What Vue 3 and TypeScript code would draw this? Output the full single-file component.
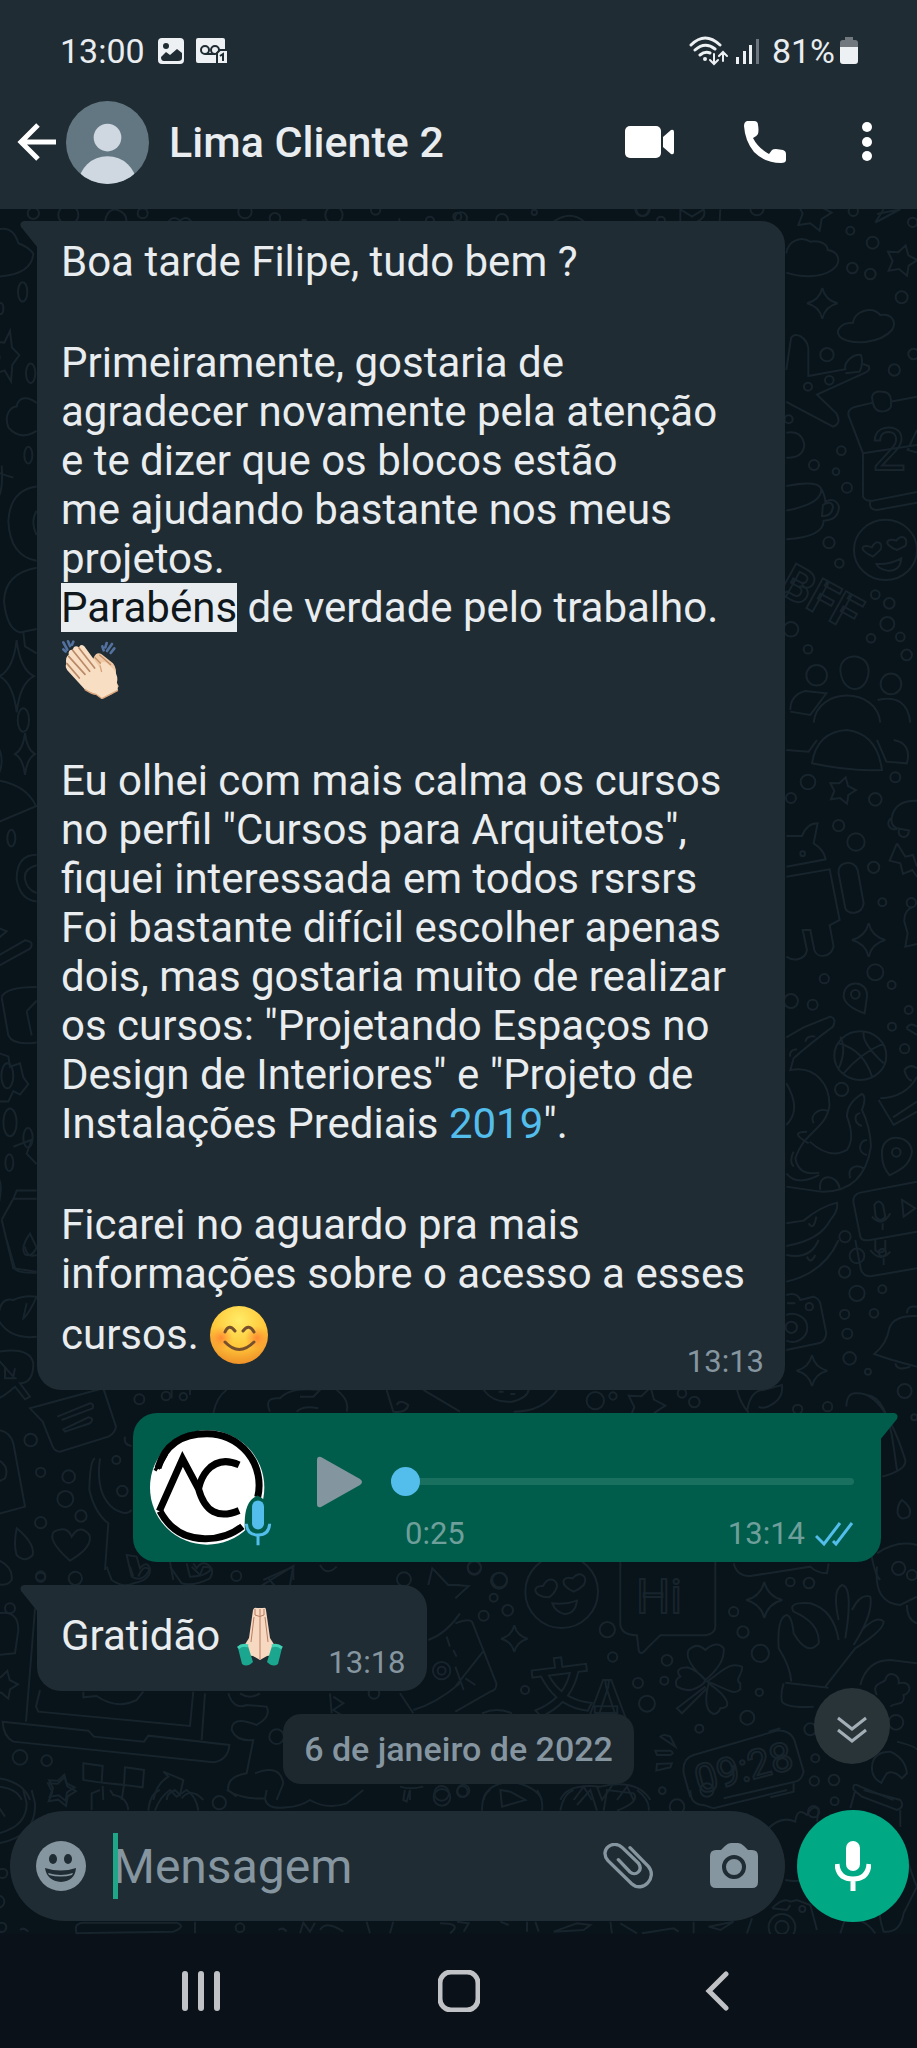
<script setup lang="ts">
import { ref } from 'vue'

type Dot = [x: number, y: number, r: number]
interface Sketch {
  place: string
  dots: Dot[]
  stars?: Dot[]
  sparkles?: Dot[]
  lines: string
}

const draft = ref('')
const progress = ref(0)

const opening = 'Boa tarde Filipe, tudo bem ?'
const thanksLines = `Primeiramente, gostaria de
agradecer novamente pela atenção
e te dizer que os blocos estão
me ajudando bastante nos meus
projetos.`
const courseLines = `Eu olhei com mais calma os cursos
no perfil "Cursos para Arquitetos",
fiquei interessada em todos rsrsrs
Foi bastante difícil escolher apenas
dois, mas gostaria muito de realizar
os cursos: "Projetando Espaços no
Design de Interiores" e "Projeto de`
const closingLines = `Ficarei no aguardo pra mais
informações sobre o acesso a esses`

function star([cx, cy, r]: Dot): string {
  const points: string[] = []
  for (let i = 0; i < 10; i++) {
    const reach = i % 2 ? r * 0.55 : r
    const angle = (i * Math.PI) / 5 - 1.3
    points.push(`${Math.round(cx + reach * Math.cos(angle))} ${Math.round(cy + reach * Math.sin(angle))}`)
  }
  return `M${points.join('L')}Z`
}

function sparkle([x, y, r]: Dot): string {
  const k = Math.round(r / 5)
  return `M${x} ${y - r}Q${x + k} ${y - k} ${x + r} ${y}Q${x + k} ${y + k} ${x} ${y + r}Q${x - k} ${y + k} ${x - r} ${y}Q${x - k} ${y - k} ${x} ${y - r}Z`
}

/* Wallpaper drawings, grouped by the part of the canvas that they cover. */
const sketches: Sketch[] = [
  {
    place: 'translate(617 200) scale(.3333)',
    dots: [[75, 28, 20], [420, 26, 20], [700, 92, 12], [767, 128, 18], [706, 204, 16], [760, 222, 16], [854, 292, 18], [630, 464, 20], [832, 510, 17], [890, 462, 16], [573, 560, 12], [637, 541, 13], [673, 752, 13], [591, 795, 15], [657, 815, 10], [690, 863, 15], [636, 1028, 17], [667, 1090, 13], [775, 1184, 13], [817, 1210, 16], [811, 1272, 21], [762, 1315, 13], [850, 1311, 13], [869, 1365, 16], [573, 1348, 13], [522, 1288, 22], [515, 658, 12], [709, 34, 14], [887, 67, 14], [599, 1426, 31], [822, 1452, 31]],
    stars: [[588, 40, 56], [853, 182, 48]],
    sparkles: [[616, 310, 46]],
    lines: 'M508 160C512 125 550 105 580 125C615 120 632 135 632 150C668 155 675 190 645 210C610 235 550 232 508 218 M708 368C710 335 765 315 790 345C825 340 840 365 825 390C790 430 710 435 675 415C650 400 665 368 708 368Z M508 510L522 415C535 390 570 415 574 445V528L685 508C680 485 710 460 732 465Q740 490 728 515L685 520 M738 492L755 498Q762 510 745 518L600 584L658 640Q675 670 648 680L508 606 M768 608L710 622Q690 630 695 648L738 760V890Q745 905 768 902L900 876 M738 760L900 735 M900 690L872 750L900 758 M765 590Q770 572 795 575Q820 575 822 600V620Q815 636 790 634Q768 632 765 590 M820 605L900 590 M760 905Q755 930 780 930L900 908 M508 698Q555 690 562 735Q558 775 508 773 M508 858Q600 840 612 865Q620 910 508 932 M614 868Q625 890 625 905Q655 890 666 920Q665 960 620 962Q620 1010 508 1018 M618 915Q645 900 648 920Q645 950 615 948Z M780 42L850 28 M780 65L840 32 M711 1050A94 90 0 1 1 900 1050A94 90 0 1 1 711 1050 M768 1070C715 1045 740 1030 765 1042C780 1015 800 1030 790 1050Z M840 1050C790 1030 815 1012 838 1022C855 1000 875 1015 865 1038Z M778 1092Q815 1095 853 1075Q850 1115 812 1112Q785 1108 778 1092Z M670 1410C670 1355 755 1355 755 1415C750 1485 675 1485 670 1410Z M520 1530Q520 1485 565 1473L628 1480L580 1545L520 1535 M590 1568C600 1460 780 1460 790 1568 M782 1500Q870 1480 880 1568',
  },
  {
    place: 'translate(617 740) scale(.3333)',
    dots: [[573, 126, 22], [522, 174, 15], [775, 178, 19], [835, 112, 15], [665, 257, 17], [717, 306, 26], [770, 382, 17], [796, 487, 12], [557, 341, 7], [622, 716, 14], [775, 697, 24], [824, 735, 12], [587, 794, 15], [522, 783, 21], [715, 763, 13], [825, 860, 12], [863, 926, 14], [875, 810, 12], [674, 1048, 20], [838, 1237, 13], [684, 1490, 17], [720, 1548, 22], [796, 1538, 11], [883, 488, 14]],
    stars: [[675, 152, 42]],
    sparkles: [[755, 600, 50]],
    lines: 'M585 70Q600 -25 690 -30Q780 -20 795 90Q700 95 585 70Z M508 30L575 35L600 0 M780 0L808 65L870 70Q885 10 830 0 M508 288H555Q570 250 602 250L590 310Q622 330 626 358L508 380 M508 410L638 388L668 540L638 556L650 620C640 655 600 655 592 630L580 570H557L570 630C565 660 530 665 508 650 M665 400C660 360 715 360 722 390L740 490C735 525 692 525 685 505Z M840 310L865 350L888 345L900 380 M840 310L818 362L850 370L858 402L886 390L900 410 M900 182Q835 180 825 230Q818 255 840 265L880 272 M822 235A15 15 0 1 0 842 265 M850 265A15 15 0 1 0 875 275 M890 500Q860 510 862 545L872 580L865 620L900 612 M680 770C680 715 755 720 750 770L743 820Q685 800 680 770Z M508 892L560 862Q590 850 640 830Q660 835 648 860Q580 910 530 955L520 990C600 975 640 1040 637 1100C625 1170 560 1175 535 1255Q545 1310 607 1298 M565 905Q570 885 595 890 M520 950Q515 930 540 928 M590 1150C575 1120 615 1100 636 1115 M508 1030Q555 1110 508 1155 M578 1205Q640 1260 690 1230Q715 1195 690 1130Q690 1090 735 1062Q750 1070 735 1110Q760 1160 762 1220Q740 1360 610 1355L508 1340 M575 1210C530 1185 535 1175 570 1175 M530 1235Q515 1265 530 1280 M610 1350C600 1300 660 1300 668 1345 M700 1315C690 1285 715 1270 740 1285 M750 1200C725 1200 720 1240 750 1245 M730 1120C710 1120 710 1150 735 1158 M508 1300Q540 1340 607 1305 M652 947A78 73 0 1 1 808 947A78 73 0 1 1 652 947 M665 910Q740 930 765 1010 M680 1000Q730 940 800 910 M670 890Q690 930 665 985 M740 878Q735 910 800 970 M785 1080L830 1155L900 1115 M790 1075Q870 1070 900 1010 M828 1132L900 1085 M862 990Q880 970 900 985 M862 990Q870 1020 885 1022 M795 1245C790 1175 880 1180 885 1235C880 1275 850 1290 818 1306Q795 1280 795 1245Z M900 1325L730 1358Q705 1365 710 1390L730 1490Q735 1505 760 1500L900 1475 M772 1395Q785 1375 798 1395L805 1430Q790 1450 776 1430Z M765 1430Q795 1465 820 1420 M797 1450V1470 M855 1380L895 1405L860 1430Z M508 1450L560 1442Q610 1400 660 1388Q665 1410 640 1440Q610 1500 508 1518 M575 1450Q590 1475 598 1430 M868 865Q880 845 900 860 M868 865L900 885',
  },
  {
    place: 'translate(457 1240) scale(.3333)',
    dots: [[1163, 96, 17], [1200, 160, 23], [1276, 148, 12], [1163, 223, 14], [1251, 220, 13], [1171, 281, 15], [1178, 355, 19], [1233, 395, 9], [1343, 453, 21], [1372, 532, 9], [1003, 262, 17], [1057, 200, 11], [415, 482, 26], [468, 468, 11], [675, 460, 13], [712, 486, 16], [1112, 500, 14], [1022, 508, 14], [52, 984, 20], [128, 1020, 22]],
    stars: [[565, 500, 60]],
    sparkles: [[1065, 392, 46]],
    lines: 'M988 45Q1060 60 1085 0 M988 125Q1100 100 1145 0 M1050 50Q1060 75 1075 45 M1195 0L1212 90Q1222 112 1245 108L1380 85 M1240 30Q1270 70 1300 35 M1280 55V75 M1255 0V30Q1268 45 1285 30V0 M988 165Q1020 155 1030 180L1070 170Q1085 175 1090 190L1108 280Q1105 305 1085 310L988 330 M988 225A45 42 0 1 1 988 302 M990 190H1015 M1380 228Q1310 225 1297 265Q1290 310 1252 342Q1300 360 1380 380 M1350 220Q1350 195 1380 200 M1315 370Q1320 395 1360 380 M80 450Q110 490 165 485Q210 475 215 450 M170 515Q260 515 300 450 M125 455H140 M160 462H175 M840 450Q850 490 875 518 M870 515Q880 450 920 450L975 435Q980 470 950 490Q920 510 905 500 M1168 500Q1170 455 1200 460Q1280 455 1345 660Q1350 690 1275 710 M1230 465Q1290 470 1310 620L1320 690 M1335 780Q1370 805 1355 830Q1330 845 1322 820Q1320 795 1335 780Z M1240 920Q1250 1000 1270 1020 M1260 940Q1320 900 1380 915',
  },
  {
    place: 'translate(0 1240) scale(.3333)',
    dots: [[418, 478, 15], [92, 600, 19], [122, 697, 14], [206, 710, 19], [196, 777, 24], [122, 848, 17], [243, 828, 17], [349, 660, 12], [367, 753, 16], [498, 468, 13], [550, 470, 11], [122, 1008, 14]],
    stars: [],
    lines: 'M20 0L45 85Q50 100 110 98 M75 20Q80 55 110 45 M-5 230Q0 170 40 180Q70 165 110 170Q85 225 70 235L80 190 M-5 240Q30 300 110 290 M-5 335Q90 320 100 370Q100 430 60 430L90 470L75 478L45 440Q10 470 -5 475 M-5 360L40 410L45 385 M15 380V415H50 M90 505L310 445L348 560Q345 580 325 590L180 635Q165 635 158 620L128 545Z M172 530L270 490Q282 490 278 505L185 540 M190 568L265 532Q285 535 270 550L195 575Z M515 475V440L570 430V465 M-5 570Q30 575 40 610L75 800L-5 822 M-5 660Q30 680 15 715L-5 725 M285 655Q270 660 268 750Q285 820 325 850L315 990 M300 655Q285 760 340 805Q380 830 395 810 M375 590Q370 615 395 618 M50 865Q105 910 98 945Q75 970 50 945Q40 915 50 865Z M210 962Q140 900 162 875Q200 855 215 890Q240 850 268 885Q280 920 210 962Z M380 945L395 1010Q430 1030 450 985Q440 960 420 985L410 950Z M510 965L520 1020 M560 970L570 1010Q620 1010 635 985Q610 955 590 985L580 970 M640 520Q650 470 680 450 M810 515Q790 470 840 475Q870 440 960 450L940 470H900 M1010 450Q1050 480 1040 515 M890 515Q910 495 955 505 M1160 450L1180 515Q1220 520 1225 495Q1200 475 1190 495 M1270 450L1380 515 M790 1020L880 980V1020',
  },
  {
    place: 'translate(0 1560) scale(.3333)',
    dots: [[60, 592, 22], [140, 602, 16], [122, 52, 14], [226, 55, 20], [709, 48, 15], [1212, 58, 21], [30, 145, 15], [1122, 400, 16], [1325, 332, 12], [1325, 332, 26], [830, 530, 22], [1325, 700, 22]],
    stars: [[10, 375, 44], [182, 684, 42]],
    lines: 'M-5 0Q40 20 35 60Q20 80 -5 72 M320 20L335 60Q370 85 400 70Q450 60 450 30Q430 10 415 50 M390 20L400 50 M510 20L545 70Q580 80 630 55Q650 20 610 20L600 45L575 20 M780 80L880 18L870 75 M805 55L825 78 M960 15Q980 50 1010 20 M1285 75L1297 25L1345 75H1380 M-5 160Q55 150 55 210L45 280L-5 285 M105 145L78 485 M120 390L108 440L115 455L570 498L580 395 M615 400L605 540 M250 395V412L290 408Q350 450 410 420L430 395 M8 485L265 512L282 530L432 545L445 527L688 555Q685 600 640 607L40 545Q10 530 8 485Z M250 610L308 618L305 668L250 660Z M375 622L432 630L428 682L372 675Z M308 668L372 675L365 720 M308 678L310 720 M460 720Q470 670 505 650L490 635L550 660L540 705L525 690Q500 700 500 720 M545 715Q575 680 610 720 M685 400Q700 450 740 435L800 440Q815 470 770 495Q695 465 695 510Q710 545 760 540L740 640Q680 650 685 690L710 710 M765 640Q840 610 850 670L830 720 M720 400Q750 420 780 400 M1285 240Q1340 220 1380 160 M1340 230L1350 260 M1360 270L1370 290 M1200 400L1240 460 M1240 450Q1310 430 1380 370 M1000 410L1030 430L1000 450L1025 465 M990 400L995 460 M-5 655Q70 665 90 720 M-5 680Q50 685 65 720 M1200 680Q1230 690 1270 680 M1230 690V720',
  },
  {
    place: 'translate(457 1560) scale(.3333)',
    dots: [[52, 22, 20], [126, 62, 24], [110, 113, 12], [152, 151, 16], [80, 167, 15], [451, 209, 23], [467, 291, 14], [204, 390, 12], [543, 369, 15], [622, 362, 12], [630, 301, 16], [570, 431, 24], [830, 155, 14], [858, 216, 17], [910, 280, 26], [907, 397, 11], [871, 473, 21], [727, 506, 12], [616, 692, 10], [1000, 66, 13], [1056, 69, 16], [1075, 595, 12], [1072, 663, 14], [1131, 660, 16], [1060, 508, 18], [1317, 487, 22], [1325, 25, 20], [19, 692, 18], [1365, 45, 15]],
    sparkles: [[172, 236, 40], [922, 120, 54]],
    lines: 'M205 95A109 109 0 1 1 423 95A109 109 0 1 1 205 95 M275 112C225 110 225 75 258 78C275 45 305 60 299 83Q290 105 275 112Z M350 95C305 75 315 45 347 55C370 30 395 50 380 75Q365 90 350 95Z M286 130Q325 135 360 122Q355 162 322 162Q295 155 286 130Z M490 5V195Q495 225 540 226L545 270Q550 290 570 265L610 226H745Q775 220 775 200V5 M-5 75L35 78L-5 115 M-5 190Q35 175 45 185L118 370Q120 390 100 395L-5 455 M-5 380L78 275 M25 355L55 375 M-5 320L20 390 M850 370C830 360 860 340 855 320C820 305 800 330 750 365C800 380 830 410 850 388Z M745 360Q680 300 695 270Q720 245 745 270Q780 240 800 265Q805 310 745 360Z M740 370Q700 405 660 380Q650 360 670 350Q650 325 690 322Q720 330 745 360Z M755 370Q735 450 770 462Q785 460 790 445Q815 445 810 425Q800 400 755 370Z M745 380L660 445L675 460L750 385 M1003 365Q1000 320 965 265Q960 170 990 165Q1005 170 1010 220Q1050 290 1085 250Q1090 190 1010 155Q990 125 1060 130Q1130 150 1145 240 M1145 180Q1125 90 1155 75Q1190 80 1165 235 M1185 150Q1210 100 1240 110Q1250 160 1190 255 M1215 210Q1260 165 1280 185Q1280 210 1195 265L1105 380 M980 370Q970 400 975 425Q990 445 1070 440 M985 368L1115 383 M1210 375Q1230 300 1300 300L1380 310 M1260 405C1240 370 1280 370 1285 360C1290 330 1330 340 1325 370C1365 360 1365 400 1340 405C1345 440 1315 425 1300 440 M1260 20Q1250 130 1330 135L1380 110 M1350 135Q1350 180 1380 190 M830 10Q840 50 880 48L1060 20Q1080 40 1110 40L1115 10 M75 460Q120 440 165 460 M610 530L655 560L640 530Q620 520 610 530Z M595 572H640Q655 580 640 585H600Z M598 632L640 622L645 610L600 612Z M700 712L680 640Q675 595 710 585L960 512Q1005 510 1015 550L1040 635Q1035 660 1015 665L800 715 M1010 670V695L940 712 M935 515L970 505 M1320 545Q1380 560 1380 570 M1245 625Q1245 575 1300 575Q1345 595 1350 640L1335 655Q1310 630 1290 640Q1270 670 1275 670Q1245 655 1245 625Z M1190 690Q1185 665 1210 680L1310 720 M80 720Q90 670 165 665Q240 680 255 720 M310 720Q330 670 430 680Q540 655 580 720 M350 720L380 680L405 720 M420 680L435 720L470 670 M480 720L510 680L530 720',
  },
  {
    place: 'translate(0 1790) scale(.3333)',
    dots: [[658, 38, 20], [1326, 22, 25], [8, 250, 14], [-5, 335, 18], [720, 413, 13], [5, 412, 14]],
    stars: [[182, 5, 46]],
    lines: 'M-5 160Q110 140 105 40L95 0 M-5 130Q80 110 80 40L70 0 M-5 50L15 80 M275 60V10L300 0 M330 0L340 15Q380 20 385 60 M445 62Q450 10 480 0 M465 62Q480 20 510 0L530 20L560 0Q590 20 595 62 M680 0Q730 30 795 25Q800 60 860 52Q900 50 930 30Q980 60 1040 40L1090 0 M795 25L800 0 M1215 0L1210 30L1220 35L1230 0 M230 430Q220 400 250 398H530Q560 410 520 425L310 428Z M585 395V430 M60 420Q70 410 85 425 M835 420Q850 410 860 425 M900 430L910 398L930 425L945 398 M960 420Q980 390 1030 425 M1100 395L1110 430 M1170 430L1180 395 M1320 400Q1390 400 1350 430',
  },
  {
    place: 'translate(457 1790) scale(.3333)',
    dots: [[16, 5, 16], [1133, 34, 12], [1070, 65, 17], [1036, 357, 9], [975, 412, 40], [975, 412, 20], [750, 0, 20], [660, 50, 22]],
    lines: 'M75 62Q75 10 100 0 M240 0Q260 30 255 62 M130 0L135 50L205 30L160 5Z M310 62Q320 10 350 0 M360 45L400 0L420 62 M440 62L450 0L530 10Q550 35 480 62 M540 0Q580 30 575 62 M700 0Q700 45 740 45L770 55L990 0 M1190 0L1215 20L1320 60Q1345 50 1330 30L1220 0 M1195 0L1180 55 M930 120Q970 75 1015 95Q1020 50 1050 75Q1070 40 1085 60L1080 95 M1330 60V110 M1350 205Q1370 270 1380 290L1340 370Q1330 430 1280 425Q1265 380 1270 360 M985 270Q1030 280 1050 260 M945 355Q980 320 1000 335L1020 330L1060 345L1080 420 M945 355L990 360L1000 345 M870 430L885 385 M1150 430L1165 385Q1220 380 1255 430 M0 395L35 400L20 425 M130 395L155 405 M210 395V425 M235 395L245 425 M290 425L360 400L400 405L380 420Z M460 395L465 430 M490 400L540 430 M555 430L650 415L665 425 M710 430V395 M755 410L830 395L790 420Z',
  },
  {
    place: 'translate(0 205) scale(.3333 .695)',
    dots: [[68, 125, 14], [2, 149, 8], [85, 360, 12], [92, 242, 14], [70, 741, 17], [34, 911, 12], [30, 1320, 20], [84, 1342, 14], [28, 1378, 12], [22, 1253, 18]],
    stars: [[20, 218, 38]],
    sparkles: [[50, 678, 52], [75, 790, 30]],
    lines: 'M-5 35Q40 30 55 55Q85 60 100 70Q95 100 -5 103 M25 320C10 300 35 290 50 290C55 275 85 275 110 285 M25 320Q60 340 110 325 M-5 385Q20 390 40 392 M-5 420Q10 410 5 375 M110 405Q30 410 25 455Q30 505 110 512 M110 440Q90 455 110 475 M110 522Q15 530 12 570Q20 610 60 615L110 610 M70 615L75 635L110 645 M-5 780Q15 800 -5 820 M-5 828Q80 835 108 865L-5 888 M110 935Q50 935 50 970Q60 1000 110 1002 M110 950Q70 955 75 970Q80 985 110 990 M-5 1040L20 1045L-5 1055 M-5 1080L75 1058Q105 1060 90 1070L-5 1095 M5 1140L25 1195Q40 1210 110 1205 M5 1140Q15 1125 110 1125 M80 1160L110 1145 M80 1160L95 1195 M-5 1220L25 1225L30 1240L60 1235L70 1255L85 1265L60 1280L40 1275L25 1290H-5 M40 1355L95 1345L80 1365L110 1380 M-5 1400Q10 1410 -5 1440 M5 1460L40 1530L110 1535 M5 1460L40 1430H110 M40 1430L50 1418H110 M90 1480Q60 1500 75 1510Q95 1515 110 1500Z',
  },
  {
    place: 'translate(0 0) scale(.3333)',
    dots: [[100, 640, 17], [205, 645, 30], [428, 640, 15], [735, 635, 20], [825, 655, 16], [1002, 645, 26], [1127, 630, 14], [1290, 662, 12], [1372, 650, 12]],
    lines: 'M315 665Q320 630 345 628 M345 628Q380 635 380 665 M505 665Q520 645 540 662Q560 645 575 665 M905 660H920 M1198 655V665',
  },
  {
    place: 'translate(457 0) scale(.3333)',
    dots: [[12, 655, 18], [135, 660, 18], [232, 637, 8], [558, 628, 20], [612, 662, 12]],
    lines: 'M290 665Q340 630 382 665 M670 665V628L705 650L740 628Q750 650 720 665 M790 628L788 665 M1255 668L1280 628 M1255 668L1330 628',
  },
]
</script>

<template>
  <div class="phone">
    <header class="top">
      <div class="status">
        <div class="status-side">
          <time>13:00</time>
          <svg class="status-photo" width="26" height="26" viewBox="0 0 26 26" aria-hidden="true">
            <rect width="26" height="26" rx="4" fill="#edf1f4" />
            <circle cx="8" cy="8" r="3" fill="#202c33" />
            <path d="M3 19L8 14L12 17L19 11L24 15V20Q24 23 20 23H6Q3 23 3 19Z" fill="#202c33" />
          </svg>
          <svg width="32" height="26" viewBox="0 0 32 26" aria-hidden="true">
            <rect width="29" height="25" rx="2" fill="#edf1f4" />
            <g fill="none" stroke="#202c33" stroke-width="2">
              <circle cx="9" cy="12" r="4" />
              <circle cx="19" cy="12" r="4" />
              <path d="M9 16H19" />
            </g>
            <path d="M21 26V15L24 12H32V26Z" fill="#edf1f4" stroke="#202c33" stroke-width="2" />
            <path d="M24 18L27 16V23" fill="none" stroke="#202c33" stroke-width="2" />
          </svg>
        </div>
        <div class="status-side">
          <svg width="39" height="30" viewBox="0 0 39 30" fill="none" stroke="#edf1f4" stroke-width="3" stroke-linecap="round" aria-hidden="true">
            <path d="M2 9Q16 -5 31 9M6 14Q16 5 26 13M11 19Q16 15 21 17" />
            <circle cx="16" cy="23" r="1" stroke-width="2" />
            <path d="M25 18V27M21 24L25 28L29 24M34 25V17M30 20L34 16L38 20" stroke-width="2" />
          </svg>
          <svg class="signal" width="25" height="26" viewBox="0 0 25 26" aria-hidden="true">
            <path d="M1 19h3v7H1zM8 13h3v13H8zM14 7h3v19h-3z" fill="#edf1f4" />
            <path d="M21 1h3v25h-3z" fill="#6b757b" />
          </svg>
          <span>81%</span>
          <svg class="battery" width="18" height="28" viewBox="0 0 18 28" aria-hidden="true">
            <path d="M5 0H13V3H15Q18 3 18 6V10H0V6Q0 3 3 3H5Z" fill="#71797e" />
            <path d="M0 10H18V24Q18 27 15 27H3Q0 27 0 24Z" fill="#edf1f4" />
          </svg>
        </div>
      </div>

      <div class="appbar">
        <button class="icon" type="button" aria-label="Voltar">
          <svg width="39" height="38" viewBox="0 0 39 38" fill="none" stroke="#fff" stroke-width="5" aria-hidden="true">
            <path d="M39 19H4M21 2L4 19L21 36" />
          </svg>
        </button>
        <svg class="contact" width="83" height="83" viewBox="0 0 84 84" aria-hidden="true">
          <defs><clipPath id="face"><circle cx="42" cy="42" r="42" /></clipPath></defs>
          <g clip-path="url(#face)">
            <rect width="84" height="84" fill="#637783" />
            <circle cx="42" cy="37" r="14" fill="#cfd8e0" />
            <ellipse cx="42" cy="83" rx="29" ry="27" fill="#cfd8e0" />
          </g>
        </svg>
        <h1>Lima Cliente 2</h1>
        <div class="actions">
          <button class="icon" type="button" aria-label="Chamada de vídeo">
            <svg width="50" height="32" viewBox="0 0 50 32" fill="#fff" aria-hidden="true">
              <rect width="36" height="32" rx="5" />
              <path d="M38 11L46 4Q49 3 49 6V26Q49 29 46 28L38 21Z" />
            </svg>
          </button>
          <button class="icon" type="button" aria-label="Chamada de voz">
            <svg width="42" height="42" viewBox="0 0 42 42" fill="#fff" aria-hidden="true">
              <path d="M3 0H10Q14 0 14 4Q15 9 14 13Q13 15 9 17Q14 27 25 33L28 29Q29 28 32 28L39 29Q42 30 42 33V39Q42 42 37 42Q21 42 10 31Q1 20 0 5Q0 1 3 0Z" />
            </svg>
          </button>
          <button class="icon menu" type="button" aria-label="Mais opções">
            <svg width="12" height="40" viewBox="0 0 12 40" fill="#fff" aria-hidden="true">
              <circle cx="6" cy="5" r="5" /><circle cx="6" cy="20" r="5" /><circle cx="6" cy="34" r="5" />
            </svg>
          </button>
        </div>
      </div>
    </header>

    <div class="chat">
      <svg class="wallpaper" viewBox="0 209 917 1725" preserveAspectRatio="xMidYMin slice" aria-hidden="true">
        <g v-for="sketch in sketches" :key="sketch.place" :transform="sketch.place">
          <circle v-for="(dot, i) in sketch.dots" :key="i" :cx="dot[0]" :cy="dot[1]" :r="dot[2]" />
          <path v-for="(dot, i) in sketch.stars" :key="'star' + i" :d="star(dot)" />
          <path v-for="(dot, i) in sketch.sparkles" :key="'sparkle' + i" :d="sparkle(dot)" />
          <path :d="sketch.lines" />
        </g>
        <text x="636" y="1613" class="doodle-hi">Hi</text>
        <text x="872" y="470" class="doodle-date">2</text>
        <text class="doodle-bff" transform="translate(777 592) rotate(29)">BFF</text>
        <text class="doodle-clock" transform="translate(699 1794) rotate(-15)">09:28</text>
        <text class="doodle-lang" transform="translate(534 1712) rotate(-7)">文</text>
        <text class="doodle-letter" x="587" y="1722">A</text>
      </svg>

      <main class="messages">
        <article class="bubble received long">
          <p>{{ opening }}</p>
          <p class="spaced">{{ thanksLines }}<br><mark>Parabéns</mark> de verdade pelo trabalho.</p>
          <svg class="clap" width="60" height="60" viewBox="188 236 180 180" role="img" aria-label="Aplausos">
            <g stroke-width="8" stroke-linecap="round" stroke="#52719f">
              <path d="M195 246L207 268M209 243L215 257M195 267L202 274M225 244L221 253M341 251L326 272M325 248L321 261M312 258L316 270M348 264L337 278" />
            </g>
            <path d="M286 292Q295 273 310 282L344 309Q359 327 350 356L361 378Q350 404 310 413L291 401L249 371Z" fill="#efc9a5" />
            <path d="M289 291L322 325M303 283L338 314" stroke="#c3906b" stroke-width="4" />
            <path d="M204 310Q198 320 211 334L259 387Q281 401 293 402L311 415L359 390L355 370Q362 350 346 327L325 308Q310 300 305 315L307 325L258 258Q247 249 242 261Q228 252 223 268Q209 267 211 283Q200 290 204 310Z" fill="#f8dec3" />
            <path d="M211 288L260 342M223 270L274 333M242 263L289 323M206 310L243 353" stroke="#ba8967" stroke-width="5" stroke-linecap="round" fill="none" />
            <path d="M259 387Q281 401 293 402L311 415L359 390M305 315L310 335" stroke="#d8a47c" stroke-width="4" fill="none" />
          </svg>
          <p class="after-clap">{{ courseLines }}<br>Instalações Prediais <a href="#2019">2019</a>".</p>
          <p class="spaced">{{ closingLines }}</p>
          <div class="last-row close">
            <p>cursos.</p>
            <svg class="emoji" width="60" height="60" viewBox="0 0 60 60" role="img" aria-label="Sorriso">
              <defs>
                <radialGradient id="sun" cx=".5" cy=".25" r=".75"><stop offset="0" stop-color="#ffec68" /><stop offset=".6" stop-color="#ffc83a" /><stop offset="1" stop-color="#ef9128" /></radialGradient>
                <radialGradient id="blush"><stop offset="0" stop-color="#ff7932" stop-opacity=".8" /><stop offset="1" stop-color="#ff8c30" stop-opacity="0" /></radialGradient>
              </defs>
              <circle cx="30" cy="30" r="29" fill="url(#sun)" />
              <circle cx="12" cy="33" r="12" fill="url(#blush)" /><circle cx="48" cy="33" r="12" fill="url(#blush)" />
              <path d="M16 27Q20 18 26 26M34 26Q40 18 45 27M16 37Q30 52 45 37" fill="none" stroke="#76502d" stroke-width="3" stroke-linecap="round" />
            </svg>
            <time>13:13</time>
          </div>
        </article>

        <article class="bubble sent" aria-label="Mensagem de voz">
          <svg class="logo" width="115" height="115" viewBox="450 568 346 346" role="img" aria-label="AC">
            <circle cx="622" cy="741" r="172" fill="#fff" />
            <g fill="none" stroke="#000">
              <path d="M474 682Q505 579 620 579A155 155 0 0 1 774 770M480 812Q525 895 615 895Q680 896 728 858" stroke-width="21" />
              <path d="M465 690L490 650M475 685L500 640" stroke-width="10" />
              <path d="M478 812L548 655L596 745Q625 850 718 810" stroke-width="21" stroke-miterlimit="6" />
              <path d="M718 673Q660 647 622 690Q604 710 596 745" stroke-width="21" />
            </g>
            <path d="M774 765Q732 780 735 860L742 895H805V785Z" fill="#005c4b" />
            <rect x="757" y="780" width="36" height="87" rx="18" fill="#53bdeb" />
            <path d="M740 850Q742 884 775 884Q808 884 810 850M775 884V915" fill="none" stroke="#53bdeb" stroke-width="9" />
          </svg>
          <button class="icon play" type="button" aria-label="Reproduzir">
            <svg width="46" height="52" viewBox="0 0 46 52" aria-hidden="true">
              <path d="M0 4Q0 0 4 1L43 23Q47 26 43 29L4 51Q0 52 0 48Z" fill="#83959e" />
            </svg>
          </button>
          <div class="voice">
            <input v-model.number="progress" type="range" min="0" max="25" aria-label="Posição do áudio">
            <div class="voice-meta">
              <span>0:25</span>
              <time>13:14</time>
              <svg width="39" height="25" viewBox="0 0 39 25" fill="none" stroke="#53bdeb" stroke-width="3" aria-label="Lida" role="img">
                <path d="M1 14L9 22L25 1M18 19L21 22L37 1" />
              </svg>
            </div>
          </div>
        </article>

        <article class="bubble received short">
          <div class="last-row">
            <p>Gratidão</p>
            <svg class="emoji" width="60" height="60" viewBox="0 0 60 60" role="img" aria-label="Mãos postas">
              <path d="M23 4Q24 1 27 2H33Q36 1 36 4L40 32L45 40Q45 50 37 50L30 54L23 50Q14 50 14 40L19 32Z" fill="#f7d8c0" />
              <path d="M30 3V53M25 3V9Q30 12 34 9V3M24 11L21 36M35 11L38 36" stroke="#b87d62" stroke-width="1" fill="none" />
              <path d="M8 42Q12 38 18 40L23 56Q17 62 12 58ZM52 42Q47 38 42 40L37 56Q43 62 48 58Z" fill="#1ba78f" />
              <path d="M8 42Q12 38 18 40M52 42Q47 38 42 40" stroke="#41d2b6" stroke-width="3" fill="none" />
            </svg>
            <time>13:18</time>
          </div>
        </article>

        <p class="day">6 de janeiro de 2022</p>

        <button class="icon jump" type="button" aria-label="Ir para o fim">
          <svg width="30" height="28" viewBox="0 0 30 28" fill="none" stroke="#a3afb6" stroke-width="3" aria-hidden="true">
            <path d="M1 2L15 13L29 2M1 14L15 25L29 14" />
          </svg>
        </button>
      </main>

      <form class="composer" @submit.prevent>
        <div class="field">
          <button class="icon" type="button" aria-label="Emojis">
            <svg width="50" height="50" viewBox="0 0 50 50" aria-hidden="true">
              <circle cx="25" cy="25" r="25" fill="#8696a0" />
              <ellipse cx="17" cy="18" rx="4" ry="5" fill="#202c33" /><ellipse cx="32" cy="18" rx="4" ry="5" fill="#202c33" />
              <path d="M9 27Q25 32 40 27Q39 40 25 41Q11 40 9 27Z" fill="#202c33" />
              <path d="M12 32Q25 36 37 32L36 34Q25 37 13 34Z" fill="#8696a0" />
            </svg>
          </button>
          <div class="entry">
            <input v-model="draft" type="text" placeholder="Mensagem" aria-label="Mensagem">
            <span class="caret"></span>
          </div>
          <button class="icon" type="button" aria-label="Anexar">
            <svg width="50" height="46" viewBox="438 160 150 138" fill="none" stroke="#8696a0" stroke-width="10" stroke-linecap="round" aria-hidden="true">
              <path d="M519 174L574 230C602 263 558 312 524 282L453 213C425 181 468 147 496 174L544 220C560 243 535 261 519 247L484 210" />
            </svg>
          </button>
          <button class="icon" type="button" aria-label="Câmera">
            <svg width="48" height="46" viewBox="0 0 48 46" aria-hidden="true">
              <path d="M11 7L15 3Q18 0 21 0H28Q31 0 34 3L38 7H42Q48 7 48 13V39Q48 45 42 45H6Q0 45 0 39V13Q0 7 6 7Z" fill="#8696a0" />
              <circle cx="24" cy="24" r="10" fill="none" stroke="#202c33" stroke-width="4" />
            </svg>
          </button>
        </div>
        <button class="icon mic" type="button" aria-label="Gravar áudio">
          <svg width="36" height="50" viewBox="0 0 36 50" aria-hidden="true">
            <rect x="11" width="14" height="30" rx="7" fill="#fff" />
            <path d="M2 23Q3 38 18 38Q33 38 34 23M18 38V50" fill="none" stroke="#fff" stroke-width="5" />
          </svg>
        </button>
      </form>
    </div>

    <nav class="system" aria-label="Sistema">
      <button class="icon" type="button" aria-label="Recentes">
        <svg width="38" height="40" viewBox="0 0 38 40" fill="#c0c2c5" aria-hidden="true">
          <rect width="6" height="40" rx="3" /><rect x="16" width="6" height="40" rx="3" /><rect x="32" width="6" height="40" rx="3" />
        </svg>
      </button>
      <button class="icon" type="button" aria-label="Início">
        <svg width="42" height="42" viewBox="0 0 42 42" aria-hidden="true">
          <rect x="2" y="2" width="38" height="38" rx="11" fill="none" stroke="#c0c2c5" stroke-width="5" />
        </svg>
      </button>
      <button class="icon" type="button" aria-label="Voltar à tela anterior">
        <svg width="24" height="40" viewBox="0 0 24 40" fill="none" stroke="#c0c2c5" stroke-width="5" stroke-linecap="round" aria-hidden="true">
          <path d="M21 3L4 20L21 37" />
        </svg>
      </button>
    </nav>
  </div>
</template>

<style>
body {
  margin: 0;
  background: #0a1118;
}
</style>

<style scoped>
.phone {
  display: flex;
  flex-direction: column;
  min-height: 100vh;
  font-family: Roboto, "Noto Sans", sans-serif;
  color: #e9edef;
  background: #0a1118;
}

svg {
  display: block;
  flex: none;
}

p,
h1 {
  margin: 0;
}

.icon {
  display: flex;
  align-items: center;
  justify-content: center;
  flex: none;
  padding: 0;
  border: 0;
  background: none;
  cursor: pointer;
}

.top {
  background: #202c33;
}

.status {
  display: flex;
  justify-content: space-between;
  height: 48px;
  padding: 27px 59px 0 60px;
  font-size: 34px;
}

.status-side {
  display: flex;
  align-items: center;
}

.status-photo {
  margin: 0 12px 0 13px;
}

.signal {
  margin: 0 12px 0 7px;
}

.battery {
  margin-left: 5px;
}

.appbar {
  display: flex;
  align-items: center;
  height: 134px;
  padding: 0 38px 0 17px;
}

.contact {
  margin: 0 20px 0 10px;
}

h1 {
  font-size: 43px;
  font-weight: 500;
}

.actions {
  display: flex;
  align-items: center;
  gap: 69px;
  margin-left: auto;
}

.menu {
  width: 24px;
}

.chat {
  position: relative;
  display: flex;
  flex: 1;
  flex-direction: column;
  overflow: hidden;
  background: #08131a;
}

.wallpaper {
  position: absolute;
  inset: 0;
  width: 100%;
  height: 100%;
  fill: none;
  stroke: #18242b;
  stroke-width: 2px;
}

.wallpaper * {
  vector-effect: non-scaling-stroke;
}

.doodle-hi {
  font-size: 48px;
}

.doodle-date {
  font-size: 60px;
}

.doodle-bff {
  font-size: 48px;
  font-weight: 700;
}

.doodle-clock {
  font-size: 40px;
}

.doodle-lang {
  font-family: "Noto Sans CJK JP", sans-serif;
  font-size: 60px;
  font-weight: 700;
}

.doodle-letter {
  font-size: 60px;
  font-weight: 700;
}

.messages {
  position: relative;
  display: flex;
  flex: 1;
  flex-direction: column;
  gap: 23px;
  padding-top: 12px;
}

.bubble {
  position: relative;
  border-radius: 24px;
  font-size: 42px;
  line-height: 49px;
}

.bubble::before {
  position: absolute;
  top: 0;
  width: 18px;
  height: 27px;
  background: inherit;
  content: "";
}

.bubble p {
  white-space: pre-line;
}

.received {
  margin: 0 132px 0 37px;
  border-top-left-radius: 0;
  background: #202c33;
}

.received::before {
  left: -17px;
  clip-path: path("M4 0H18V27L1 6Q-1 1 4 0Z");
}

.sent {
  display: flex;
  align-items: flex-start;
  margin: 0 36px 0 133px;
  border-top-right-radius: 0;
  background: #005c4b;
}

.sent::before {
  right: -17px;
  clip-path: path("M14 0H0V27L17 6Q19 1 14 0Z");
}

.long {
  padding: 16px 21px 10px 24px;
}

.short {
  align-self: flex-start;
  padding: 21px 21px 10px 24px;
}

.spaced {
  margin-top: 52px;
}

.clap {
  margin-top: 7px;
}

.after-clap {
  margin-top: 57px;
}

mark {
  color: #10171c;
  background: #e9edf0;
}

.bubble a {
  color: #53bdeb;
  text-decoration: none;
}

.last-row {
  display: flex;
  align-items: flex-start;
  height: 75px;
}

.last-row p {
  padding-top: 5px;
}

.close {
  margin-top: 7px;
}

.emoji {
  margin-left: 10px;
}

.last-row time {
  align-self: flex-end;
  margin-left: auto;
}

.short time {
  padding-left: 38px;
}

.bubble time,
.voice-meta {
  font-size: 31px;
  line-height: 36px;
  color: #8696a0;
}

.logo {
  margin: 17px 52px 0 17px;
  overflow: visible;
}

.play {
  margin-top: 43px;
}

.voice {
  display: flex;
  flex: 1;
  flex-direction: column;
  gap: 20px;
  min-width: 0;
  padding: 54px 27px 10px 28px;
}

.voice input {
  width: 100%;
  height: 29px;
  margin: 0;
  appearance: none;
  background: none;
}

.voice input::-webkit-slider-runnable-track {
  height: 7px;
  border-radius: 4px;
  background: #19705f;
}

.voice input::-webkit-slider-thumb {
  width: 29px;
  height: 29px;
  margin-top: -11px;
  border-radius: 50%;
  appearance: none;
  background: #53bdeb;
}

.voice-meta {
  display: flex;
  align-items: center;
  gap: 10px;
  padding-left: 14px;
  color: #6f9f9a;
}

.voice-meta time {
  margin-left: auto;
  color: inherit;
}

.day {
  align-self: center;
  padding: 15px 21px;
  border-radius: 18px;
  font-size: 34px;
  font-weight: 500;
  line-height: 40px;
  color: #8696a0;
  background: #1c272e;
}

.jump {
  position: absolute;
  right: 27px;
  bottom: 46px;
  width: 76px;
  height: 76px;
  border-radius: 50%;
  background: #293439;
}

.jump svg {
  margin-top: 8px;
}

.composer {
  position: relative;
  display: flex;
  align-items: center;
  gap: 12px;
  padding: 0 8px 12px 10px;
}

.field {
  display: flex;
  flex: 1;
  align-items: center;
  min-width: 0;
  height: 110px;
  padding: 0 27px 0 26px;
  border-radius: 55px;
  background: #202c33;
}

.field > .icon:last-child {
  margin-left: 57px;
}

.entry {
  position: relative;
  flex: 1;
  min-width: 0;
  margin-left: 27px;
}

.entry input {
  display: block;
  box-sizing: border-box;
  width: 100%;
  height: 66px;
  padding: 0;
  border: 0;
  outline: 0;
  font: inherit;
  font-size: 48px;
  color: #e9edef;
  background: none;
}

.entry input::placeholder {
  color: #8696a0;
  opacity: 1;
}

.caret {
  position: absolute;
  top: 0;
  left: 0;
  width: 5px;
  height: 66px;
  background: #1fa587;
}

.mic {
  width: 112px;
  height: 112px;
  border-radius: 50%;
  background: #00a884;
}

.system {
  display: flex;
  align-items: center;
  justify-content: center;
  gap: 178px;
  height: 114px;
}

.system .icon {
  width: 80px;
  height: 80px;
}
</style>
